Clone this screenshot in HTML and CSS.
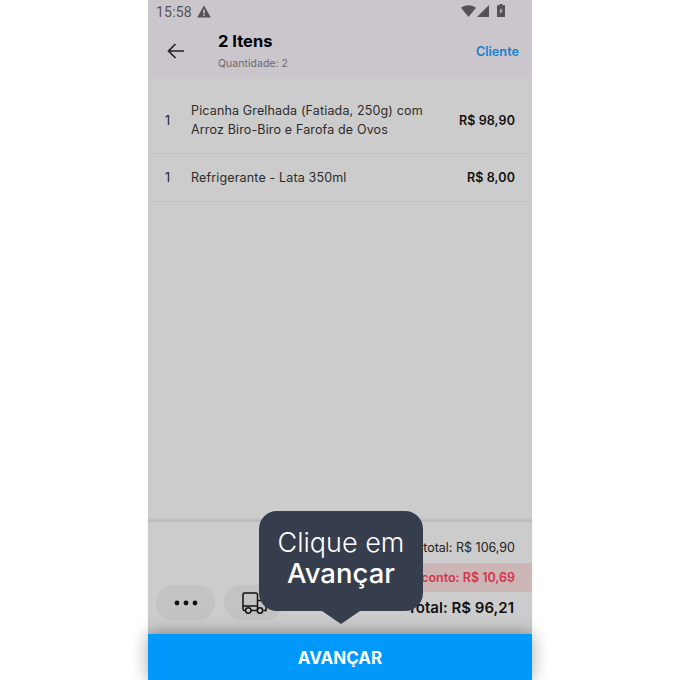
FILE: index.html
```html
<!DOCTYPE html>
<html lang="pt-BR">
<head>
    <meta charset="UTF-8">
    <meta name="viewport" content="width=device-width, initial-scale=1.0">
    <title>Itens</title>
    <link rel="stylesheet" href="styles.css">
</head>
<body>
    <div class="phone">
        <div class="top">
            <div class="status">
                <div class="status-left">
                    <span class="clock">15:58</span>
                    <svg class="alert" width="14" height="13" viewBox="0 0 14 13"><path fill-rule="evenodd" d="M7 0.5 L13.8 12.5 H0.2 Z M6.2 4.5 V8.5 H7.8 V4.5 Z M6.2 9.5 V11 H7.8 V9.5 Z" fill="#555155"/></svg>
                </div>
                <div class="status-right">
                    <svg width="15" height="12" viewBox="0 0 15 12"><path d="M0 2.8 C4 -0.6 11 -0.6 15 2.8 L7.5 12 Z" fill="#555155"/></svg>
                    <svg width="12" height="12" viewBox="0 0 12 12"><path d="M12 0 V12 H0 Z" fill="#555155"/></svg>
                    <svg class="battery" width="8" height="13" viewBox="0 0 8 13"><path fill-rule="evenodd" d="M2.5 0 H5.5 V1.2 H8 V13 H0 V1.2 H2.5 Z M4.6 3.5 L2.4 7.4 H3.6 L3.3 10.2 L5.6 6.2 H4.3 Z" fill="#555155"/></svg>
                </div>
            </div>
            <div class="header">
                <svg class="back" width="18" height="16" viewBox="0 0 18 16"><path d="M17 8 H2 M8.5 1 L1.5 8 L8.5 15" fill="none" stroke="#222" stroke-width="1.7"/></svg>
                <div class="title-box">
                    <div class="title">2 Itens</div>
                    <div class="subtitle">Quantidade: 2</div>
                </div>
                <span class="client">Cliente</span>
            </div>
        </div>

        <ul class="items">
            <li class="item item-big">
                <span class="qty">1</span>
                <span class="name">Picanha Grelhada (Fatiada, 250g) com Arroz Biro-Biro e Farofa de Ovos</span>
                <span class="price">R$ 98,90</span>
            </li>
            <li class="item">
                <span class="qty">1</span>
                <span class="name">Refrigerante - Lata 350ml</span>
                <span class="price">R$ 8,00</span>
            </li>
        </ul>

        <div class="footer">
            <div class="actions">
                <div class="pill">
                    <svg width="24" height="6" viewBox="0 0 24 6"><circle cx="3" cy="3" r="2.4" fill="#111"/><circle cx="12" cy="3" r="2.4" fill="#111"/><circle cx="21" cy="3" r="2.4" fill="#111"/></svg>
                </div>
                <div class="pill pill-truck">
                    <svg width="26" height="22" viewBox="0 0 26 22"><path d="M3.4 18.5 H2.5 A1.5 1.5 0 0 1 1 17 V2.5 A1.5 1.5 0 0 1 2.5 1 H14 A1.5 1.5 0 0 1 15.5 2.5 V18.5 M9.2 18.5 H14.8 M1 14 H15.5 M15.5 8.5 H20 L24 12.5 V18.5 H21.5" fill="none" stroke="#111" stroke-width="1.5"/><circle cx="6.3" cy="18.5" r="2.7" fill="none" stroke="#111" stroke-width="1.5"/><circle cx="18" cy="18.5" r="2.7" fill="none" stroke="#111" stroke-width="1.5"/></svg>
                </div>
            </div>
            <div class="totals">
                <div class="subtotal">Subtotal: R$ 106,90</div>
                <div class="discount">Desconto: R$ 10,69</div>
                <div class="total">Total: R$ 96,21</div>
            </div>
        </div>

        <button class="next">AVANÇAR</button>

        <div class="tip">
            <span class="tip-light">Clique em</span>
            <span class="tip-strong">Avançar</span>
        </div>
    </div>
</body>
</html>
```

FILE: styles.css
```css
html, body {
    margin: 0;
    height: 680px;
    overflow: hidden;
    background: #fff;
    font-family: Inter, "Liberation Sans", sans-serif;
}
.phone {
    position: relative;
    width: 384px;
    height: 680px;
    margin: 0 auto;
    display: flex;
    flex-direction: column;
    background: #cccccc;
}
.top {
    height: 78px;
    background: #cbc6cb;
}
.status {
    height: 24px;
    padding: 0 27px 0 8px;
    display: flex;
    justify-content: space-between;
    align-items: center;
}
.status-left {
    display: flex;
    align-items: center;
    gap: 5px;
}
.clock {
    font-family: Roboto, sans-serif;
    font-size: 14px;
    letter-spacing: 0.2px;
    color: #555155;
}
.alert {
    margin-top: -2px;
}
.status-right {
    display: flex;
    align-items: center;
    gap: 1px;
    margin-top: -3px;
}
.battery {
    margin-left: 7px;
}
.header {
    height: 54px;
    display: flex;
    align-items: center;
    padding: 0 13px 0 19px;
}
.title-box {
    flex: 1;
    margin-left: 33px;
    margin-bottom: 1px;
}
.title {
    font-size: 16.5px;
    font-weight: 700;
    line-height: 20px;
    color: #000;
}
.subtitle {
    margin-top: 6px;
    font-size: 10.5px;
    letter-spacing: 0.03px;
    line-height: 14px;
    color: #6b676b;
}
.client {
    font-size: 12.7px;
    font-weight: 600;
    color: #1582cf;
}
.items {
    flex: 1;
    list-style-type: none;
    margin: 0;
    padding: 0;
}
.item {
    height: 47px;
    padding: 0 17px;
    display: flex;
    align-items: center;
    border-bottom: 1px solid #c2c2c2;
}
.item-big {
    height: 65px;
    padding-top: 10px;
}
.item-big .name {
    margin-top: -2px;
}
.qty {
    width: 26px;
    font-size: 12.5px;
    color: #1a1a1a;
}
.name {
    flex: 1;
    padding-right: 30px;
    font-size: 12.5px;
    letter-spacing: 0.15px;
    line-height: 19px;
    color: #2b2b2b;
}
.price {
    font-size: 12.5px;
    font-weight: 600;
    letter-spacing: 0.1px;
    color: #111;
    white-space: nowrap;
}
.footer {
    height: 114px;
    display: flex;
    justify-content: space-between;
    align-items: flex-end;
    border-top: 2px solid #bdbdbd;
    box-sizing: border-box;
    background: linear-gradient(#cccccc 92%, #c4c4c4);
    box-shadow: 0 -1px 2px rgba(0, 0, 0, 0.08);
}
.actions {
    display: flex;
    gap: 9px;
    padding: 0 0 14px 8px;
}
.pill {
    width: 59px;
    height: 35px;
    border-radius: 18px;
    background: #c3c3c3;
    display: flex;
    align-items: center;
    justify-content: center;
}
.pill-truck {
    justify-content: flex-start;
    padding-left: 18px;
    box-sizing: border-box;
}
.totals {
    flex: 1;
    padding-bottom: 16px;
    text-align: right;
}
.subtotal {
    padding-right: 17px;
    font-size: 12.5px;
    line-height: 20px;
    color: #222;
}
.discount {
    margin-top: 5px;
    padding-right: 17px;
    height: 29px;
    line-height: 29px;
    font-size: 12.5px;
    font-weight: 600;
    color: #d9304f;
    background: #ccb5b5;
}
.total {
    padding-right: 18px;
    margin-top: 6px;
    font-size: 15px;
    font-weight: 600;
    line-height: 20px;
    color: #111;
}
.next {
    height: 46px;
    padding: 1px 0 0;
    border: 0;
    background: #0098fb;
    color: #fff;
    font-family: Inter, sans-serif;
    font-size: 17px;
    font-weight: 700;
    box-shadow: 0 0 18px rgba(0, 0, 0, 0.35);
    position: relative;
}
.tip {
    position: absolute;
    left: 111px;
    top: 511px;
    width: 164px;
    height: 100px;
    padding-bottom: 6px;
    box-sizing: border-box;
    border-radius: 18px;
    background: #363e4e;
    color: #fff;
    display: flex;
    flex-direction: column;
    align-items: center;
    justify-content: center;
    font-size: 27px;
    line-height: 31px;
}
.tip::after {
    content: "";
    position: absolute;
    left: 63px;
    bottom: -13px;
    border-left: 19px solid transparent;
    border-right: 19px solid transparent;
    border-top: 13px solid #363e4e;
}
.tip-light {
    font-weight: 300;
}
.tip-strong {
    font-size: 27.5px;
    font-weight: 500;
}
```
